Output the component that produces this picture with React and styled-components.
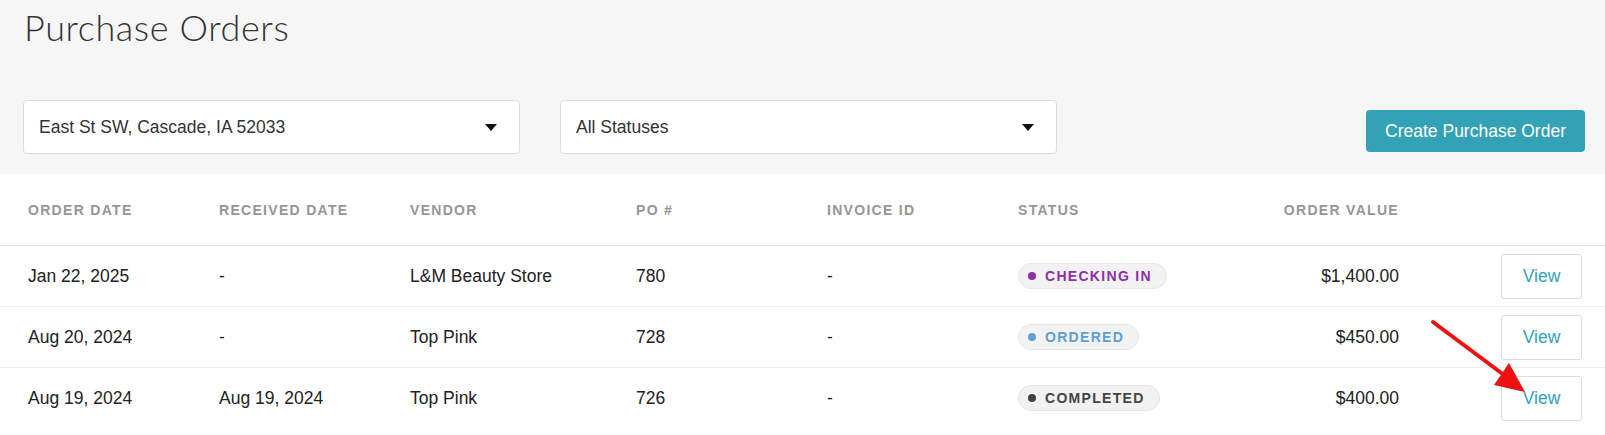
import React from "react";
import styled, { createGlobalStyle } from "styled-components";

const GlobalStyle = createGlobalStyle`
  body {
    margin: 0;
    background: #fff;
    font-family: "Liberation Sans", Arial, sans-serif;
    color: #222;
  }
`;

const orders = [
  { ordered: "Jan 22, 2025", received: "-", vendor: "L&M Beauty Store", po: "780", invoice: "-", status: "checking", value: "$1,400.00" },
  { ordered: "Aug 20, 2024", received: "-", vendor: "Top Pink", po: "728", invoice: "-", status: "ordered", value: "$450.00" },
  { ordered: "Aug 19, 2024", received: "Aug 19, 2024", vendor: "Top Pink", po: "726", invoice: "-", status: "completed", value: "$400.00" },
];

const statusMap = {
  checking: { label: "Checking In", color: "#8d2fa8" },
  ordered: { label: "Ordered", color: "#5b9fd5" },
  completed: { label: "Completed", color: "#444" },
};

const App = () => {
  return (
    <Page>
      <GlobalStyle />
      <Top>
        <Title>Purchase Orders</Title>
        <Filters>
          <Select>
            East St SW, Cascade, IA 52033
            <Caret />
          </Select>
          <Select>
            All Statuses
            <Caret />
          </Select>
          <CreateButton>Create Purchase Order</CreateButton>
        </Filters>
      </Top>
      <Table>
        <HeadRow>
          <HeadCell>Order Date</HeadCell>
          <HeadCell>Received Date</HeadCell>
          <HeadCell>Vendor</HeadCell>
          <HeadCell>PO #</HeadCell>
          <HeadCell>Invoice ID</HeadCell>
          <HeadCell>Status</HeadCell>
          <HeadCell $right>Order Value</HeadCell>
          <HeadCell />
        </HeadRow>
        {orders.map((o) => (
          <Row key={o.po}>
            <Cell>{o.ordered}</Cell>
            <Cell>{o.received}</Cell>
            <Cell>{o.vendor}</Cell>
            <Cell>{o.po}</Cell>
            <Cell>{o.invoice}</Cell>
            <Cell>
              <Pill $color={statusMap[o.status].color}>
                <Dot $color={statusMap[o.status].color} />
                {statusMap[o.status].label}
              </Pill>
            </Cell>
            <Cell $right>{o.value}</Cell>
            <Cell $right>
              <ViewButton>View</ViewButton>
            </Cell>
          </Row>
        ))}
      </Table>
      <Arrow viewBox="0 0 1605 435" width="1605" height="435">
        <line x1="1433" y1="322" x2="1504" y2="375" stroke="#ee1111" strokeWidth="4" strokeLinecap="round" />
        <polygon points="1525,392 1494,385 1509,363" fill="#ee1111" />
      </Arrow>
    </Page>
  );
};

const Page = styled.div`
  position: relative;
  width: 1605px;
  height: 435px;
  overflow: hidden;
`;

const Top = styled.div`
  background: #f6f6f6;
  padding: 10px 20px 20px 23px;
`;

const Title = styled.h1`
  margin: 0;
  font-family: Lato, "Open Sans", sans-serif;
  font-weight: 300;
  font-size: 36px;
  line-height: 35px;
  letter-spacing: 0.6px;
  color: #333;
  padding-left: 1px;
`;

const Filters = styled.div`
  display: flex;
  align-items: flex-end;
  gap: 40px;
  margin-top: 55px;
`;

const Select = styled.div`
  position: relative;
  width: 497px;
  height: 54px;
  box-sizing: border-box;
  display: flex;
  align-items: center;
  padding: 0 15px;
  background: #fff;
  border: 1px solid #dcdcdc;
  border-radius: 4px;
  font-size: 17.5px;
  color: #333;
`;

const Caret = styled.span`
  position: absolute;
  right: 22px;
  top: 50%;
  margin-top: -3px;
  width: 0;
  height: 0;
  border-left: 6px solid transparent;
  border-right: 6px solid transparent;
  border-top: 7px solid #111;
`;

const CreateButton = styled.button`
  margin-left: auto;
  margin-bottom: 2px;
  height: 42px;
  padding: 0 19px;
  border: none;
  border-radius: 4px;
  background: #33a1b6;
  color: #fff;
  font-family: "Liberation Sans", Arial, sans-serif;
  font-size: 17.5px;
`;

const Table = styled.div`
  display: flex;
  flex-direction: column;
`;

const HeadRow = styled.div`
  display: grid;
  grid-template-columns: 191px 191px 226px 191px 191px 191px 190px 1fr;
  align-items: center;
  height: 71px;
  padding: 0 23px 0 28px;
  border-bottom: 1px solid #e6e6e6;
`;

const Row = styled(HeadRow)`
  height: 60px;
  border-bottom: 1px solid #ececec;
  &:last-child {
    border-bottom: none;
  }
`;

const HeadCell = styled.div`
  font-size: 14px;
  font-weight: 700;
  letter-spacing: 1.3px;
  text-transform: uppercase;
  color: #969696;
  text-align: ${(p) => (p.$right ? "right" : "left")};
`;

const Cell = styled.div`
  font-size: 17.5px;
  color: #222;
  display: flex;
  align-items: center;
  justify-content: ${(p) => (p.$right ? "flex-end" : "flex-start")};
`;

const Pill = styled.span`
  display: inline-flex;
  align-items: center;
  gap: 9px;
  height: 26px;
  box-sizing: border-box;
  padding: 0 14px 0 9px;
  background: #f2f2f2;
  border: 1px solid #e6e6e6;
  border-radius: 13px;
  font-size: 14px;
  font-weight: 700;
  letter-spacing: 1.3px;
  text-transform: uppercase;
  color: ${(p) => p.$color};
`;

const Dot = styled.span`
  width: 8px;
  height: 8px;
  border-radius: 50%;
  background: ${(p) => p.$color};
`;

const ViewButton = styled.button`
  width: 81px;
  height: 45px;
  background: #fff;
  border: 1px solid #dcdcdc;
  border-radius: 3px;
  color: #31a3bf;
  font-family: "Liberation Sans", Arial, sans-serif;
  font-size: 17.5px;
`;

const Arrow = styled.svg`
  position: absolute;
  left: 0;
  top: 0;
  pointer-events: none;
`;

export default App;
